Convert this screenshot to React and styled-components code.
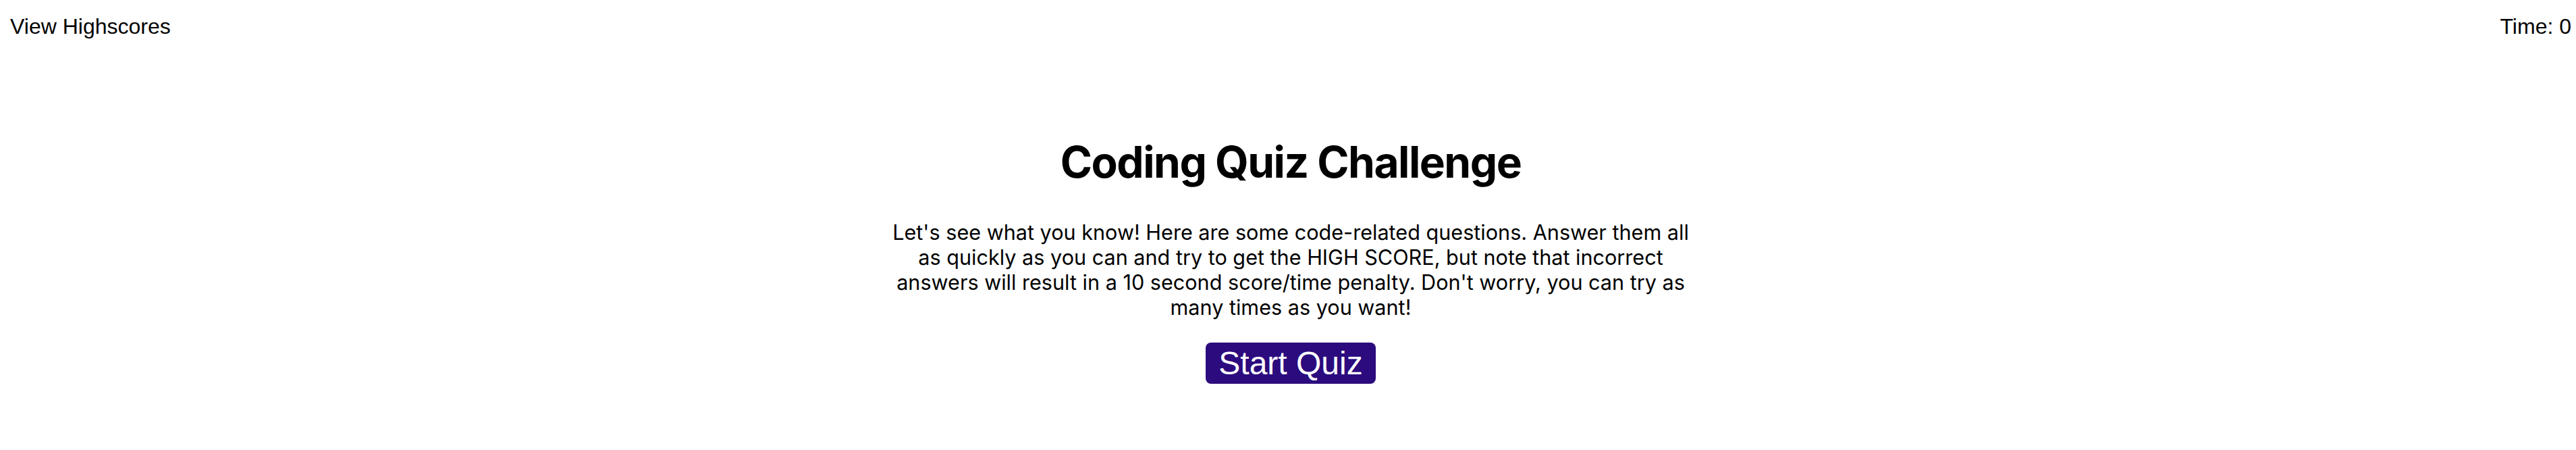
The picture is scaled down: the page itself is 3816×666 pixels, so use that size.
import styled, { createGlobalStyle } from "styled-components";

const GlobalStyle = createGlobalStyle`
  body {
    margin: 0;
    background: #fff;
    color: #000;
    font-family: Inter, "Noto Sans", sans-serif;
  }
`;

export default function App() {
  return (
    <>
      <GlobalStyle />
      <Header>
        <HeaderLink href="#">View Highscores</HeaderLink>
        <Timer>Time: 0</Timer>
      </Header>
      <Main>
        <Title>Coding Quiz Challenge</Title>
        <Intro>
          Let's see what you know! Here are some code-related questions. Answer them all
          as quickly as you can and try to get the HIGH SCORE, but note that incorrect
          answers will result in a 10 second score/time penalty. Don't worry, you can try as
          many times as you want!
        </Intro>
        <StartButton>Start Quiz</StartButton>
      </Main>
    </>
  );
}

const Header = styled.header`
  display: flex;
  justify-content: space-between;
  align-items: center;
  padding: 21px 7px 0 15px;
  font-family: "Liberation Sans", Arial, sans-serif;
  font-size: 32px;
`;

const HeaderLink = styled.a`
  color: #000;
  text-decoration: none;
`;

const Timer = styled.div`
  color: #000;
`;

const Main = styled.main`
  display: flex;
  flex-direction: column;
  align-items: center;
  padding: 143px 0 0 8px;
  text-align: center;
`;

const Title = styled.h1`
  margin: 0;
  font-size: 64px;
  font-weight: 700;
  letter-spacing: -1.5px;
`;

const Intro = styled.p`
  margin: 47px 0 0;
  max-width: 1200px;
  font-size: 30.6px;
`;

const StartButton = styled.button`
  margin-top: 34px;
  padding: 3px 19px;
  border: none;
  border-radius: 8px;
  background: #2c0b7e;
  color: #fff;
  font-family: "Liberation Sans", Arial, sans-serif;
  font-size: 48px;
  cursor: pointer;
`;
